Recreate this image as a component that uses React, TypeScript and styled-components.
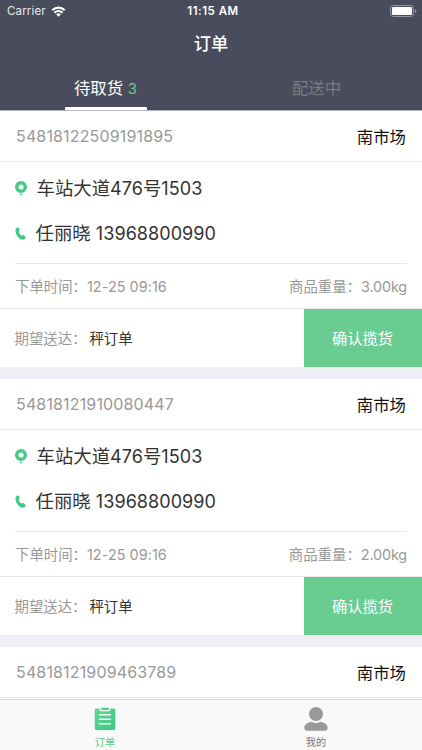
import React from "react";
import styled, { createGlobalStyle } from "styled-components";

const GlobalStyle = createGlobalStyle`
  * { box-sizing: border-box; }
  html, body { margin: 0; padding: 0; overflow: hidden; }
  body { font-family: Inter, "Noto Sans CJK SC", sans-serif; background: #efeef4; }
`;

const Screen = styled.div`
  width: 422px;
  height: 750px;
  display: flex;
  flex-direction: column;
  overflow: hidden;
  background: #efeef4;
`;

const Header = styled.header`
  height: 111px;
  flex: none;
  background: #484c5c;
  color: #fff;
  border-bottom: 1px solid #b5b6c4;
`;

const StatusBar = styled.div`
  height: 22px;
  display: grid;
  grid-template-columns: 1fr auto 1fr;
  align-items: center;
  padding: 0 5px 0 7px;
  line-height: 22px;
`;

const Carrier = styled.div`
  display: flex;
  align-items: center;
  gap: 5px;
  font-size: 11.5px;
  letter-spacing: 0.15px;
  color: #e9eaee;
`;

const Clock = styled.div`
  font-size: 11.5px;
  font-weight: 600;
  letter-spacing: 0.5px;
  padding-left: 2px;
`;

const BatteryBox = styled.div`
  display: flex;
  justify-content: flex-end;
`;

const Title = styled.h1`
  margin: 0;
  height: 43px;
  line-height: 43px;
  text-align: center;
  font-size: 17.3px;
  font-weight: 500;
`;

const Tabs = styled.nav`
  display: grid;
  grid-template-columns: 1fr 1fr;
  height: 45px;
`;

const Tab = styled.div<{ $active?: boolean }>`
  display: flex;
  flex-direction: column;
  align-items: center;
  justify-content: space-between;
  font-size: 16.4px;
  line-height: 47px;
  color: ${(p) => (p.$active ? "#fff" : "#7b7c80")};
`;

const TabLabel = styled.div`
  height: 42px;
`;

const Count = styled.span`
  font-size: 15px;
  color: #68cc90;
`;

const Underline = styled.div`
  width: 82px;
  height: 3px;
  background: #fff;
  border-radius: 1px 1px 0 0;
`;

const OrderList = styled.main`
  flex: 1;
  min-height: 0;
  overflow: hidden;
  display: flex;
  flex-direction: column;
  gap: 12px;
`;

const Card = styled.article`
  flex: none;
  min-height: 60px;
  background: #fff;
`;

const CardHead = styled.div`
  height: 51px;
  display: flex;
  align-items: center;
  justify-content: space-between;
  padding: 0 16px;
  border-bottom: 1px solid #e9e9eb;
`;

const OrderNo = styled.span`
  font-size: 16px;
  letter-spacing: 0.15px;
  color: #999;
`;

const Market = styled.span`
  font-size: 16.4px;
  color: #111;
`;

const Details = styled.div`
  height: 102px;
  margin: 0 15px;
  padding-top: 2px;
  border-bottom: 1px solid #e9e9eb;
`;

const DetailRow = styled.div`
  height: 45px;
  display: flex;
  align-items: center;
  gap: 9.5px;
  font-size: 18.4px;
  color: #333;
  white-space: nowrap;

  svg {
    margin-top: 3px;
  }
`;

const Digits = styled.span`
  font-size: 0.98em;
  letter-spacing: 0.05px;
`;

const MetaDigits = styled.span<{ $spacing: number }>`
  font-size: 14.4px;
  letter-spacing: ${(p) => p.$spacing}px;
`;

const MetaRow = styled.div`
  height: 45px;
  display: flex;
  align-items: center;
  justify-content: space-between;
  padding: 0 15px 2px;
  font-size: 14.4px;
  color: #999;
  border-bottom: 1px solid #e9e9eb;
`;

const Footer = styled.div`
  height: 58px;
  display: flex;
  justify-content: space-between;
  padding-left: 14.5px;
  font-size: 14.4px;
  line-height: 59px;
  color: #999;
`;

const Expected = styled.span`
  color: #333;
  margin-left: 3px;
`;

const ConfirmButton = styled.button`
  width: 118px;
  height: 58px;
  border: 0;
  padding: 0 1px 2px 0;
  background: #69cc91;
  color: #fff;
  font: 15.3px Inter, "Noto Sans CJK SC", sans-serif;
`;

const TabBar = styled.nav`
  height: 51px;
  flex: none;
  display: grid;
  grid-template-columns: 1fr 1fr;
  background: #f9f9f9;
  border-top: 1px solid #d5d5df;
`;

const TabBarItem = styled.div<{ $active?: boolean }>`
  display: flex;
  flex-direction: column;
  align-items: center;
  justify-content: space-between;
  padding: 7px 1px 0 0;
  font-size: 10.2px;
  line-height: 15px;
  color: ${(p) => (p.$active ? "#60ca8a" : "#777")};
`;

const WifiIcon = () => (
  <svg width="15" height="11" viewBox="0 0 14 11" fill="none" stroke="#fff" strokeWidth="2.1">
    <path d="M.8 4.2a8.8 8.8 0 0 1 12.4 0" />
    <path d="M3 6.7a5.7 5.7 0 0 1 8 0" />
    <path d="M7 10.8 4.7 8.400a3.3 3.3 0 0 1 4.6 0Z" fill="#fff" stroke="none" />
  </svg>
);

const BatteryIcon = () => (
  <svg width="27" height="12" viewBox="0 0 27 12">
    <rect x=".5" y=".5" width="23" height="11" rx="2.8" fill="none" stroke="#9296a0" />
    <rect x="2" y="2" width="20" height="8" rx="1.3" fill="#fff" />
    <path d="M25 4c1.8.5 1.8 3.500 0 4Z" fill="#9296a0" />
  </svg>
);

const PinIcon = () => (
  <svg width="12" height="15" viewBox="0 0 12 15">
    <circle cx="6" cy="6" r="4.300" fill="none" stroke="#46c985" strokeWidth="3.400" />
    <path d="M4.300 12.800h3.400L6 14.800Z" fill="#46c985" />
  </svg>
);

const PhoneIcon = () => (
  <svg width="11" height="13" viewBox="0 0 11 13.500">
    <path
      d="M.5 2.200C1 1 2.300.2 3.200.6c1 .6 1.600 2.500 1.300 3.300-.2.600-1 .8-.8 1.400.4 1.300 1.500 2.700 2.700 3.500.6.300 1.100-.6 1.800-.4 1 .2 2.500 1.500 2.500 2.400 0 1-1.200 2.400-2.600 2.400C3.800 13.200-.7 6.800.5 2.200Z"
      fill="#46c985"
    />
  </svg>
);

const ClipboardIcon = () => (
  <svg width="22" height="23" viewBox="0 0 22 23">
    <defs>
      <linearGradient id="clipboard" x1="0" y1="0" x2="1" y2="1">
        <stop offset="0" stopColor="#62d996" />
        <stop offset="1" stopColor="#3dc681" />
      </linearGradient>
    </defs>
    <path
      d="M2 1.500h3.600v1c0 1 .7 1.700 1.700 1.700h7.400c1 0 1.700-.7 1.700-1.700v-1H20c.8 0 1.300.5 1.300 1.300v18.800c0 .8-.5 1.300-1.300 1.300H2c-.8 0-1.300-.5-1.300-1.300V2.800c0-.8.5-1.300 1.300-1.300Z"
      fill="url(#clipboard)"
    />
    <rect x="7.200" y=".7" width="7.600" height="2.400" rx=".6" fill="#4dce88" />
    <path d="M5.500 7.800h11M5.500 12.300h11M5.500 16.800h11" stroke="#fff" strokeWidth="1.500" strokeLinecap="round" />
  </svg>
);

const PersonIcon = () => (
  <svg width="24" height="24" viewBox="0 0 24 24" fill="#999">
    <circle cx="12" cy="7" r="7" />
    <path d="M7.500 14.800c2.800 1.700 6.200 1.700 9 0 3.600.5 7.200 2.700 7.200 5.800 0 2-1 3.200-3 3.200H3.300c-2 0-3-1.200-3-3.200 0-3.100 3.600-5.300 7.200-5.800Z" />
  </svg>
);

type Order = { no: string; weight?: string };

const orders: Order[] = [
  { no: "54818122509191895", weight: "3.00kg" },
  { no: "54818121910080447", weight: "2.00kg" },
  { no: "54818121909463789" },
];

const OrderBody = ({ weight }: { weight: string }) => (
  <>
    <Details>
      <DetailRow>
        <PinIcon />
        <span>
          车站大道<Digits>476</Digits>号<Digits>1503</Digits>
        </span>
      </DetailRow>
      <DetailRow>
        <PhoneIcon />
        <span>
          任丽晓 <Digits>13968800990</Digits>
        </span>
      </DetailRow>
    </Details>
    <MetaRow>
      <span>
        下单时间：<MetaDigits $spacing={0.05}>12-25 09:16</MetaDigits>
      </span>
      <span>
        商品重量：<MetaDigits $spacing={-0.15}>{weight}</MetaDigits>
      </span>
    </MetaRow>
    <Footer>
      <span>
        期望送达：<Expected>秤订单</Expected>
      </span>
      <ConfirmButton>确认揽货</ConfirmButton>
    </Footer>
  </>
);

const OrderCard = ({ no, weight }: Order) => (
  <Card>
    <CardHead>
      <OrderNo>{no}</OrderNo>
      <Market>南市场</Market>
    </CardHead>
    {weight && <OrderBody weight={weight} />}
  </Card>
);

export default function App() {
  return (
    <>
      <GlobalStyle />
      <Screen>
        <Header>
          <StatusBar>
            <Carrier>
              Carrier
              <WifiIcon />
            </Carrier>
            <Clock>11:15 AM</Clock>
            <BatteryBox>
              <BatteryIcon />
            </BatteryBox>
          </StatusBar>
          <Title>订单</Title>
          <Tabs>
            <Tab $active>
              <TabLabel>
                待取货 <Count>3</Count>
              </TabLabel>
              <Underline />
            </Tab>
            <Tab>
              <TabLabel>配送中</TabLabel>
            </Tab>
          </Tabs>
        </Header>
        <OrderList>
          {orders.map((order) => (
            <OrderCard key={order.no} {...order} />
          ))}
        </OrderList>
        <TabBar>
          <TabBarItem $active>
            <ClipboardIcon />
            <span>订单</span>
          </TabBarItem>
          <TabBarItem>
            <PersonIcon />
            <span>我的</span>
          </TabBarItem>
        </TabBar>
      </Screen>
    </>
  );
}
